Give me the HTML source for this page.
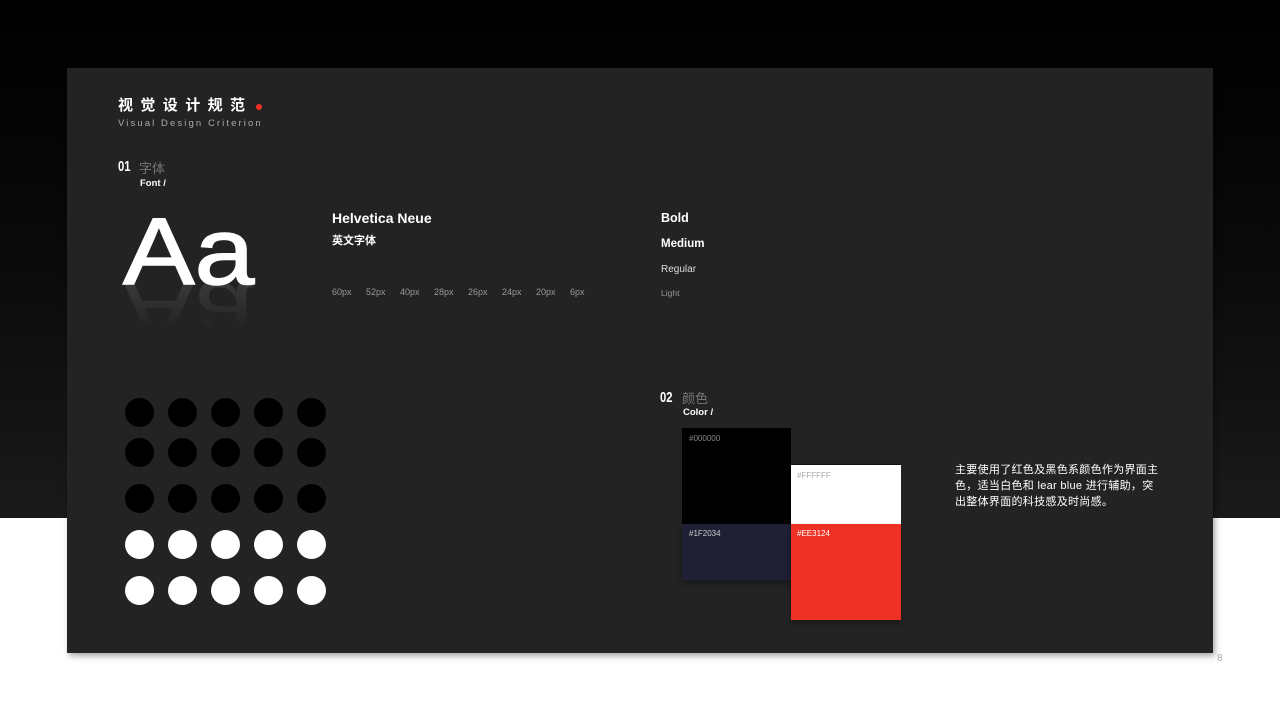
<!DOCTYPE html>
<html><head><meta charset="utf-8"><style>
*{margin:0;padding:0;box-sizing:border-box}
body{width:1280px;height:720px;position:relative;overflow:hidden;background:#fff;font-family:"Liberation Sans","Noto Sans CJK SC",sans-serif}
.top{position:absolute;left:0;top:0;width:1280px;height:518px;background:linear-gradient(#000 0%,#0a0a0a 50%,#1a1a1a 100%)}
.card{position:absolute;left:67px;top:68px;width:1146px;height:585px;background:#232323;box-shadow:2px 3px 6px rgba(0,0,0,.35)}
.a{position:absolute;white-space:nowrap}
.dot{position:absolute;width:29px;height:29px;border-radius:50%}
.sw{position:absolute;font-size:8px}
.px span{display:inline-block;width:34px}
</style></head><body>
<div class="top"></div>
<div class="card"></div>
<div class="a" style="left:118px;top:94px;font-size:15px;color:#fff;letter-spacing:7.4px;font-weight:bold">视觉设计规范</div>
<div class="a" style="left:256px;top:104px;width:6px;height:6px;border-radius:50%;background:#ee3124"></div>
<div class="a" style="left:118px;top:118px;font-size:9.5px;color:#aaa;letter-spacing:2.1px">Visual Design Criterion</div>
<div class="a" style="left:118px;top:158px;font-size:15px;color:#fff;font-weight:bold;transform:scaleX(.75);transform-origin:left">01</div>
<div class="a" style="left:139px;top:158px;font-size:13px;color:#777">字体</div>
<div class="a" style="left:140px;top:178px;font-size:9.5px;color:#fff;font-weight:bold">Font /</div>
<div class="a" style="left:123px;top:202px;font-size:95px;color:#fff;line-height:100px;-webkit-text-stroke:1.5px #fff;transform:scaleX(1.13);transform-origin:left">Aa</div>
<div class="a" style="left:123px;top:264px;font-size:95px;color:#fff;line-height:100px;transform:scaleX(1.13) scaleY(-1);transform-origin:left center;opacity:.12;-webkit-mask-image:linear-gradient(transparent 35%,#000 90%);mask-image:linear-gradient(to bottom,transparent 35%,#000 90%)">Aa</div>
<div class="a" style="left:332px;top:210px;font-size:14px;color:#fff;font-weight:bold">Helvetica Neue</div>
<div class="a" style="left:332px;top:232px;font-size:11px;color:#fff;font-weight:bold">英文字体</div>
<div class="a px" style="left:332px;top:287px;font-size:9px;color:#999"><span>60px</span><span>52px</span><span>40px</span><span>28px</span><span>26px</span><span>24px</span><span>20px</span><span>6px</span></div>
<div class="a" style="left:661px;top:211px;font-size:12.5px;color:#fff;font-weight:bold">Bold</div>
<div class="a" style="left:661px;top:238px;font-size:11.5px;color:#fff;font-weight:bold">Medium</div>
<div class="a" style="left:661px;top:264px;font-size:10px;color:#ddd">Regular</div>
<div class="a" style="left:661px;top:288px;font-size:8.5px;color:#999">Light</div>
<div class="a" style="left:660px;top:389px;font-size:15px;color:#fff;font-weight:bold;transform:scaleX(.75);transform-origin:left">02</div>
<div class="a" style="left:682px;top:388px;font-size:13px;color:#777">颜色</div>
<div class="a" style="left:683px;top:407px;font-size:9.5px;color:#fff;font-weight:bold">Color /</div>
<div class="a" style="left:682px;top:428px;width:109px;height:96px;background:#000"></div>
<div class="a" style="left:682px;top:524px;width:109px;height:56px;background:#1f2034;box-shadow:0 3px 6px rgba(0,0,0,.3)"></div>
<div class="a" style="left:791px;top:464px;width:110px;height:60px;background:#fff;border-top:1px solid #111"></div>
<div class="a" style="left:791px;top:524px;width:110px;height:96px;background:#ee3124;box-shadow:0 3px 6px rgba(0,0,0,.3)"></div>
<div class="sw" style="left:689px;top:434px;color:#888">#000000</div>
<div class="sw" style="left:689px;top:529px;color:#ccc">#1F2034</div>
<div class="sw" style="left:797px;top:471px;color:#aaa">#FFFFFF</div>
<div class="sw" style="left:797px;top:529px;color:#fff">#EE3124</div>
<div class="a" style="left:955px;top:462px;font-size:11px;line-height:16px;color:#fff;white-space:normal;width:208px;letter-spacing:0.3px">主要使用了红色及黑色系颜色作为界面主色，适当白色和 lear blue 进行辅助，突出整体界面的科技感及时尚感。</div>
<div class="a" style="left:1217px;top:653px;font-size:10px;color:#aaa">8</div>
<div class="dot" style="left:125px;top:398px;background:#000"></div><div class="dot" style="left:168px;top:398px;background:#000"></div><div class="dot" style="left:211px;top:398px;background:#000"></div><div class="dot" style="left:254px;top:398px;background:#000"></div><div class="dot" style="left:297px;top:398px;background:#000"></div>
<div class="dot" style="left:125px;top:438px;background:#000"></div><div class="dot" style="left:168px;top:438px;background:#000"></div><div class="dot" style="left:211px;top:438px;background:#000"></div><div class="dot" style="left:254px;top:438px;background:#000"></div><div class="dot" style="left:297px;top:438px;background:#000"></div>
<div class="dot" style="left:125px;top:484px;background:#000"></div><div class="dot" style="left:168px;top:484px;background:#000"></div><div class="dot" style="left:211px;top:484px;background:#000"></div><div class="dot" style="left:254px;top:484px;background:#000"></div><div class="dot" style="left:297px;top:484px;background:#000"></div>
<div class="dot" style="left:125px;top:530px;background:#fff"></div><div class="dot" style="left:168px;top:530px;background:#fff"></div><div class="dot" style="left:211px;top:530px;background:#fff"></div><div class="dot" style="left:254px;top:530px;background:#fff"></div><div class="dot" style="left:297px;top:530px;background:#fff"></div>
<div class="dot" style="left:125px;top:576px;background:#fff"></div><div class="dot" style="left:168px;top:576px;background:#fff"></div><div class="dot" style="left:211px;top:576px;background:#fff"></div><div class="dot" style="left:254px;top:576px;background:#fff"></div><div class="dot" style="left:297px;top:576px;background:#fff"></div>
</body></html>
